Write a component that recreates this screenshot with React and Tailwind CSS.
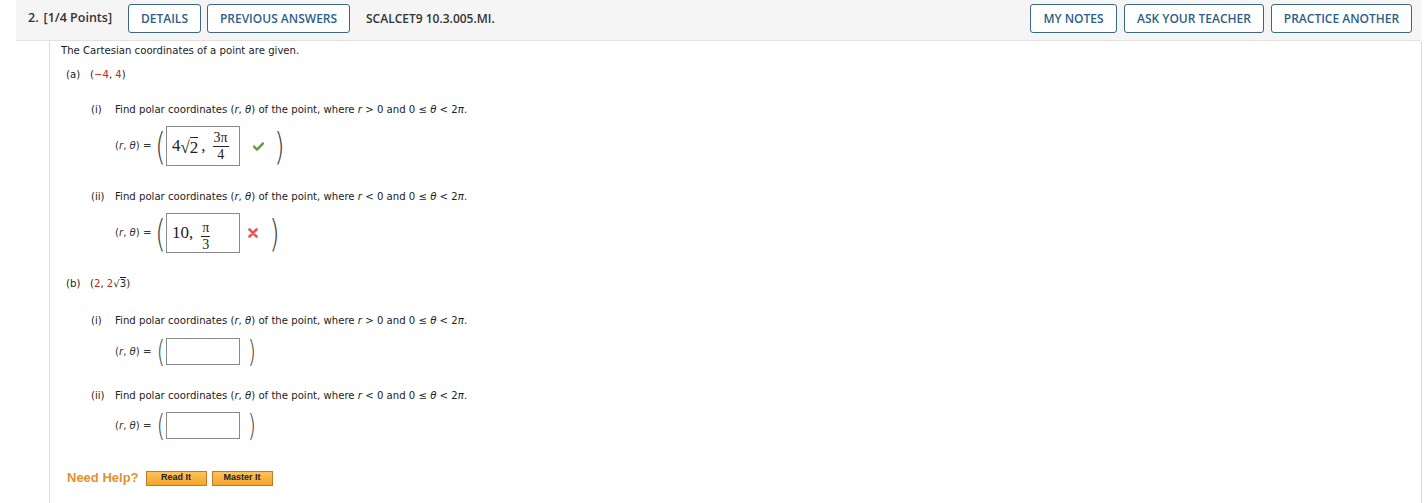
import React from "react";

const HBtn = ({ w, children }) => (
  <div
    className={`${w} h-[29px] flex items-center justify-center rounded-[3px] border-[1.5px] border-[#3d6585] bg-white text-[#2d5f88] text-[12px] font-semibold`}
    style={{ fontFamily: '"Open Sans", sans-serif' }}
  >
    {children}
  </div>
);

const Sqrt = ({ children, className = "" }) => (
  <span className={`inline-flex items-baseline ${className}`}>
    <span className="leading-none">√</span>
    <span className="border-t border-current leading-none pt-[1px]">{children}</span>
  </span>
);

const Paren = ({ children, h }) => (
  <span
    className={`inline-block text-[#444] ${h} leading-none font-extralight`}
    style={{ fontFamily: '"DejaVu Sans", sans-serif', transform: "scaleX(0.7)" }}
  >
    {children}
  </span>
);

const Check = () => (
  <svg width="11" height="9" viewBox="0 0 11 9" className="block">
    <path d="M1 4.6 L4 7.6 L10 1.4" fill="none" stroke="#5ca044" strokeWidth="2.4" strokeLinecap="round" strokeLinejoin="round" />
  </svg>
);

const Cross = () => (
  <svg width="10" height="10" viewBox="0 0 10 10" className="block">
    <path d="M1.5 1.5 L8.5 8.5 M8.5 1.5 L1.5 8.5" fill="none" stroke="#e05a5a" strokeWidth="2.6" strokeLinecap="round" />
  </svg>
);

const Frac = ({ top, bot }) => (
  <span className="inline-flex flex-col items-center leading-none text-[14px] mx-[2px]">
    <span className="px-[1px] pb-[1px]">{top}</span>
    <span className="border-t border-[#222] w-full text-center pt-[1px]">{bot}</span>
  </span>
);

const Label = () => (
  <span className="text-[#333] w-[40px] shrink-0">
    (<i>r</i>, <i>θ</i>) =
  </span>
);

const Question = ({ num, sign }) => (
  <div className="h-[20px] flex items-center pl-[41px]">
    <span className="w-[24px] shrink-0">{num}</span>
    <span>
      Find polar coordinates (<i>r</i>, <i>θ</i>) of the point, where <i>r</i> {sign} 0 and 0 ≤ <i>θ</i> &lt; 2<i>π</i>.
    </span>
  </div>
);

const AnswerRow = ({ tall, children, after }) => (
  <div className={`${tall ? "h-[40px]" : "h-[27px]"} flex items-center pl-[65px]`}>
    <Label />
    <span className="w-[11px] flex items-center justify-center">
      <Paren h={tall ? "text-[38px]" : "text-[30px]"}>(</Paren>
    </span>
    {children}
    {after}
  </div>
);

export default function App() {
  return (
    <div
      className="w-[1426px] h-[503px] bg-white overflow-hidden text-[#222]"
      style={{ fontFamily: '"DejaVu Sans", Verdana, sans-serif' }}
    >
      {/* header */}
      <div className="ml-[16px] w-[1405px] h-[41px] bg-[#f5f5f5] border-b border-[#e2e2e2] flex items-start pt-[4px] pl-[12px] pr-[9px]">
        <div
          className="h-[29px] flex items-center text-[12.5px] font-semibold text-[#333] mr-[16px]"
          style={{ fontFamily: '"Open Sans", sans-serif' }}
        >
          <span>2.</span>
          <span className="ml-[5px]">[1/4 Points]</span>
        </div>
        <div className="flex gap-[6px]">
          <HBtn w="w-[73px]">DETAILS</HBtn>
          <HBtn w="w-[143px]">PREVIOUS ANSWERS</HBtn>
        </div>
        <div
          className="h-[29px] flex items-center ml-[16px] text-[12px] font-semibold text-[#333]"
          style={{ fontFamily: '"Open Sans", sans-serif' }}
        >
          SCALCET9 10.3.005.MI.
        </div>
        <div className="ml-auto flex gap-[7px]">
          <HBtn w="w-[87px]">MY NOTES</HBtn>
          <HBtn w="w-[140px]">ASK YOUR TEACHER</HBtn>
          <HBtn w="w-[141px]">PRACTICE ANOTHER</HBtn>
        </div>
      </div>

      {/* body */}
      <div className="ml-[49px] w-[1373px] h-[462px] border-l border-r border-[#dcdcdc] text-[10.15px] text-[#222]">
        <div className="h-[20px] flex items-center pl-[11px]">The Cartesian coordinates of a point are given.</div>

        <div className="h-[20px] mt-[4px] flex items-center pl-[16px]">
          <span className="w-[24px] shrink-0">(a)</span>
          <span>
            (<span className="text-[#c8201f]">−4</span>, <span className="text-[#c8201f]">4</span>)
          </span>
        </div>

        <div className="mt-[15px]">
          <Question num="(i)" sign=">" />
        </div>
        <div className="mt-[6px]">
          <AnswerRow
            tall
            after={
              <>
                <span className="ml-[13px]"><Check /></span>
                <span className="ml-[10px] w-[11px] flex items-center justify-center"><Paren h="text-[38px]">)</Paren></span>
              </>
            }
          >
            <div
              className="w-[74px] h-[40px] border border-[#8a8a8a] flex items-center pl-[5px] text-[17px] text-[#222]"
              style={{ fontFamily: '"Liberation Serif", serif' }}
            >
              <span>4</span>
              <Sqrt>2</Sqrt>
              <span className="ml-[3px] mr-[5px]">,</span>
              <Frac top="3π" bot="4" />
            </div>
          </AnswerRow>
        </div>

        <div className="mt-[21px]">
          <Question num="(ii)" sign="<" />
        </div>
        <div className="mt-[6px]">
          <AnswerRow
            tall
            after={
              <>
                <span className="ml-[8px]"><Cross /></span>
                <span className="ml-[11px] w-[11px] flex items-center justify-center"><Paren h="text-[38px]">)</Paren></span>
              </>
            }
          >
            <div
              className="w-[74px] h-[40px] border border-[#8a8a8a] flex items-center pl-[5px] text-[17px] text-[#222]"
              style={{ fontFamily: '"Liberation Serif", serif' }}
            >
              <span>10,</span>
              <span className="ml-[6px]"><Frac top="π" bot="3" /></span>
            </div>
          </AnswerRow>
        </div>

        <div className="h-[20px] mt-[21px] flex items-center pl-[16px]">
          <span className="w-[24px] shrink-0">(b)</span>
          <span className="inline-flex items-baseline">
            (<span className="text-[#c8201f]">2</span>,&nbsp;<span className="text-[#c8201f]">2</span>
            <Sqrt>3</Sqrt>)
          </span>
        </div>

        <div className="mt-[17px]">
          <Question num="(i)" sign=">" />
        </div>
        <div className="mt-[7px]">
          <AnswerRow
            after={<span className="ml-[6px] w-[11px] flex items-center justify-center"><Paren h="text-[30px]">)</Paren></span>}
          >
            <div className="w-[74px] h-[27px] border border-[#8a8a8a]" />
          </AnswerRow>
        </div>

        <div className="mt-[21px]">
          <Question num="(ii)" sign="<" />
        </div>
        <div className="mt-[6px]">
          <AnswerRow
            after={<span className="ml-[6px] w-[11px] flex items-center justify-center"><Paren h="text-[30px]">)</Paren></span>}
          >
            <div className="w-[74px] h-[27px] border border-[#8a8a8a]" />
          </AnswerRow>
        </div>

        <div
          className="mt-[29px] h-[20px] flex items-center pl-[17px]"
          style={{ fontFamily: '"Liberation Sans", Arial, sans-serif' }}
        >
          <span className="text-[13px] font-bold text-[#e3902f] mr-[7px]">Need Help?</span>
          <span className="w-[61px] h-[15px] flex items-center justify-center border border-[#c57a20] bg-gradient-to-b from-[#fbc25a] to-[#f4a52a] text-[9px] font-bold text-[#222]">
            Read It
          </span>
          <span className="ml-[5px] w-[61px] h-[15px] flex items-center justify-center border border-[#c57a20] bg-gradient-to-b from-[#fbc25a] to-[#f4a52a] text-[9px] font-bold text-[#222]">
            Master It
          </span>
        </div>
      </div>
    </div>
  );
}
